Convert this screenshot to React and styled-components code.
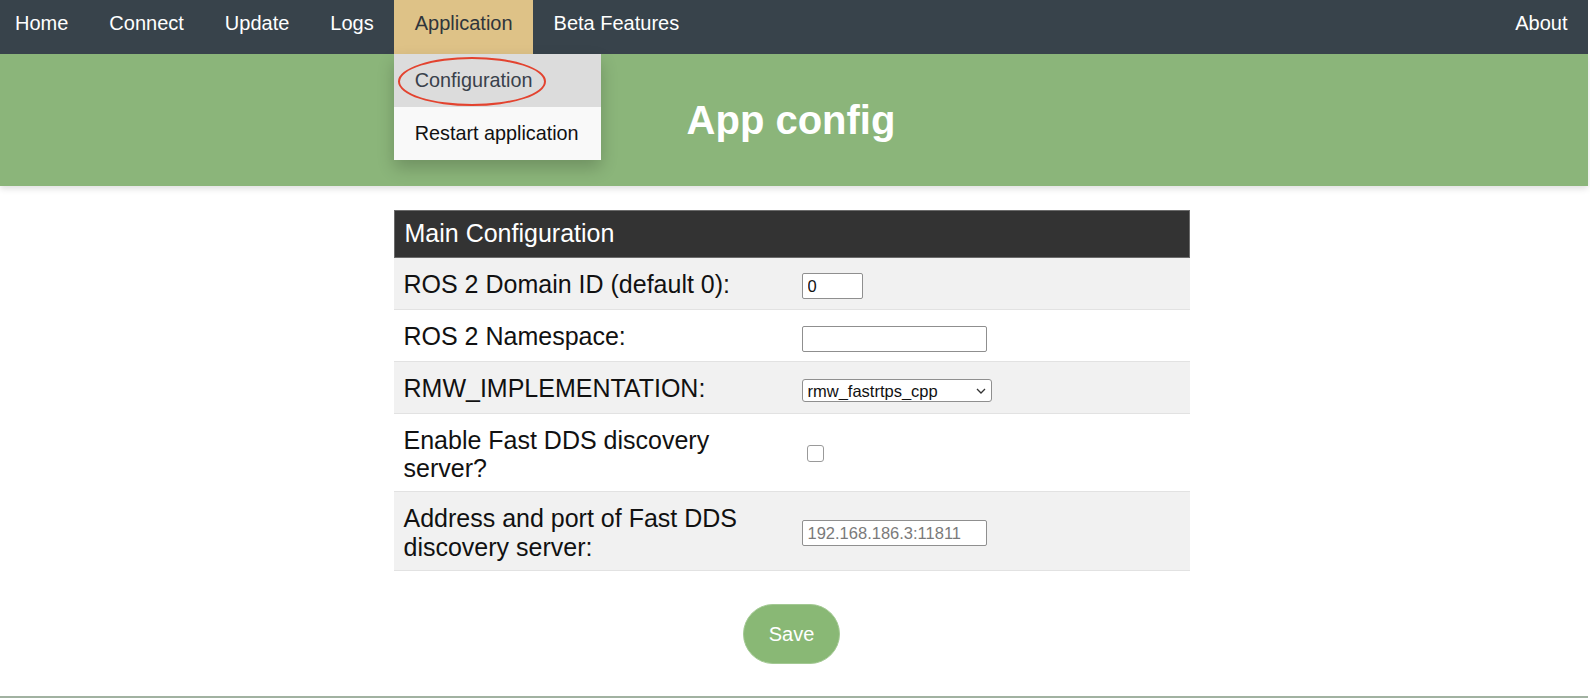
import React from 'react';
import styled, { createGlobalStyle } from 'styled-components';

const GlobalStyle = createGlobalStyle`
  html, body { margin: 0; padding: 0; background: #fff; }
  body { font-family: 'Liberation Sans', Arial, Helvetica, sans-serif; }
  * { box-sizing: border-box; }
`;

const Page = styled.div`
  width: 1588px;
  min-height: 698px;
  display: flex;
  flex-direction: column;
`;

const NavBar = styled.nav`
  display: flex;
  height: 54px;
  background: #38434b;
  position: relative;
  z-index: 2;
`;

const NavItem = styled.div`
  position: relative;
  margin-left: ${(p) => (p.$push ? 'auto' : '0')};
`;

const NavLink = styled.a`
  display: block;
  height: 54px;
  padding: 0 20.5px 0 ${(p) => (p.$first ? '15px' : '20.5px')};
  line-height: 47px;
  font-size: 20px;
  color: ${(p) => (p.$active ? '#2f353b' : '#ffffff')};
  background: ${(p) => (p.$active ? '#dec287' : 'transparent')};
  text-decoration: none;
  white-space: nowrap;
  cursor: pointer;
`;

const Dropdown = styled.div`
  position: absolute;
  top: 54px;
  left: 0;
  width: 207px;
  background: #f9f9f9;
  box-shadow: 0 8px 16px rgba(0, 0, 0, 0.2);
`;

const DropItem = styled.a`
  display: block;
  position: relative;
  height: 53px;
  line-height: 53px;
  padding: 0 20.5px;
  font-size: 19.8px;
  color: ${(p) => (p.$hover ? '#39414b' : '#111111')};
  background: ${(p) => (p.$hover ? '#dcdcdc' : '#f9f9f9')};
  white-space: nowrap;
  text-decoration: none;
  cursor: pointer;
`;

const Annotation = styled.span`
  position: absolute;
  left: 4px;
  top: 3px;
  width: 148px;
  height: 49px;
  border: 2px solid #e3432f;
  border-radius: 50%;
  pointer-events: none;
`;

const Hero = styled.header`
  height: 131.5px;
  background: #8bb57a;
  display: flex;
  align-items: center;
  justify-content: center;
  padding-right: 6px;
  box-shadow: 0 3px 6px rgba(0, 0, 0, 0.12);
  position: relative;
  z-index: 1;
`;

const Title = styled.h1`
  margin: 1px 0 0 0;
  font-size: 40px;
  line-height: 46px;
  font-weight: bold;
  color: #ffffff;
`;

const Main = styled.main`
  display: flex;
  flex-direction: column;
  align-items: center;
  padding: 24px 5px 0 0;
`;

const ConfigTable = styled.div`
  width: 796px;
`;

const TableHead = styled.div`
  height: 48px;
  background: #333333;
  border: 1px solid #6b6b6b;
  color: #ffffff;
  font-size: 25px;
  line-height: 28.75px;
  padding: 8.5px 10px 0;
`;

const Row = styled.div`
  display: grid;
  grid-template-columns: 1fr 1fr;
  align-items: center;
  min-height: 52px;
  background: ${(p) => (p.$shade ? '#f1f1f1' : '#ffffff')};
  border-bottom: 1px solid #e2e2e2;
`;

const Label = styled.label`
  padding: 12px 10px 9px;
  font-size: 25px;
  line-height: 28.4px;
  color: #111111;
`;

const Field = styled.div`
  padding: 0 10px;
  display: flex;
  align-items: center;
`;

const TextInput = styled.input`
  width: ${(p) => p.$w}px;
  height: 26px;
  margin-top: ${(p) => p.$drop}px;
  border: 1px solid #8f8f8f;
  border-radius: 2px;
  font-family: 'Liberation Sans', Arial, sans-serif;
  font-size: 16.5px;
  padding: 1px 5px;
  color: #111111;
  background: #ffffff;
  outline: none;
  &::placeholder {
    color: #7a7a7a;
  }
`;

const SelectWrap = styled.div`
  position: relative;
  width: 190px;
  height: 23px;
  margin-top: 7px;
`;

const Select = styled.select`
  appearance: none;
  -webkit-appearance: none;
  width: 100%;
  height: 100%;
  border: 1px solid #8f8f8f;
  border-radius: 3px;
  background: #ffffff;
  font-family: 'Liberation Sans', Arial, sans-serif;
  font-size: 16.5px;
  padding: 0 20px 0 5px;
  color: #111111;
  outline: none;
`;

const Chevron = styled.svg`
  position: absolute;
  right: 6px;
  top: 9px;
  pointer-events: none;
`;

const Checkbox = styled.input`
  appearance: none;
  -webkit-appearance: none;
  width: 17px;
  height: 17px;
  margin: 2px 0 0 5px;
  border: 1px solid #9a9a9a;
  border-radius: 3px;
  background: #ffffff;
`;

const SaveButton = styled.button`
  margin-top: 33px;
  width: 97px;
  height: 60px;
  border-radius: 30px;
  border: 1px solid #a3c993;
  background: #89b875;
  color: #ffffff;
  font-family: 'Liberation Sans', Arial, sans-serif;
  font-size: 20px;
  cursor: pointer;
`;

const Footer = styled.footer`
  margin-top: auto;
  height: 2px;
  background: #a1b2a1;
`;

const navItems = ['Home', 'Connect', 'Update', 'Logs'];

export default function App() {
  return (
    <>
      <GlobalStyle />
      <Page>
        <NavBar>
          {navItems.map((n, i) => (
            <NavItem key={n}>
              <NavLink $first={i === 0}>{n}</NavLink>
            </NavItem>
          ))}
          <NavItem>
            <NavLink $active>Application</NavLink>
            <Dropdown>
              <DropItem $hover>
                Configuration
                <Annotation />
              </DropItem>
              <DropItem>Restart application</DropItem>
            </Dropdown>
          </NavItem>
          <NavItem>
            <NavLink>Beta Features</NavLink>
          </NavItem>
          <NavItem $push>
            <NavLink>About</NavLink>
          </NavItem>
        </NavBar>
        <Hero>
          <Title>App config</Title>
        </Hero>
        <Main>
          <ConfigTable>
            <TableHead>Main Configuration</TableHead>
            <Row $shade>
              <Label>ROS 2 Domain ID (default 0):</Label>
              <Field>
                <TextInput $w={61} $drop={6} defaultValue="0" />
              </Field>
            </Row>
            <Row>
              <Label>ROS 2 Namespace:</Label>
              <Field>
                <TextInput $w={185} $drop={7} defaultValue="" />
              </Field>
            </Row>
            <Row $shade>
              <Label>RMW_IMPLEMENTATION:</Label>
              <Field>
                <SelectWrap>
                  <Select defaultValue="rmw_fastrtps_cpp">
                    <option value="rmw_fastrtps_cpp">rmw_fastrtps_cpp</option>
                    <option value="rmw_cyclonedds_cpp">rmw_cyclonedds_cpp</option>
                  </Select>
                  <Chevron width="10" height="6" viewBox="0 0 10 6">
                    <polyline points="1,1 5,5 9,1" fill="none" stroke="#333" strokeWidth="1.3" />
                  </Chevron>
                </SelectWrap>
              </Field>
            </Row>
            <Row>
              <Label>Enable Fast DDS discovery server?</Label>
              <Field>
                <Checkbox type="checkbox" />
              </Field>
            </Row>
            <Row $shade>
              <Label>Address and port of Fast DDS discovery server:</Label>
              <Field>
                <TextInput $w={185} $drop={4} placeholder="192.168.186.3:11811" />
              </Field>
            </Row>
          </ConfigTable>
          <SaveButton>Save</SaveButton>
        </Main>
        <Footer />
      </Page>
    </>
  );
}
